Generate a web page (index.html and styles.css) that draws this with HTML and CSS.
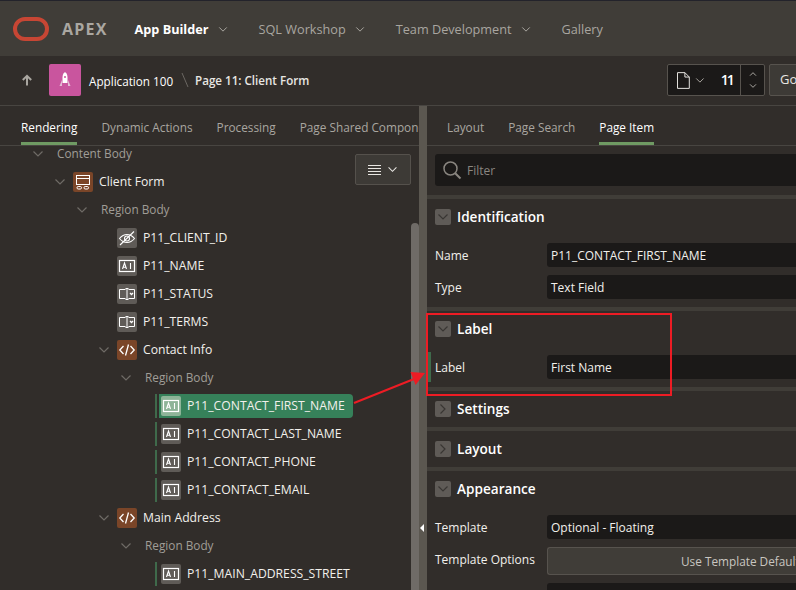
FILE: index.html
```html
<!DOCTYPE html>
<html lang="en">
<head>
<meta charset="utf-8">
<title>Page Designer</title>
<link rel="stylesheet" href="styles.css">
</head>
<body>
<svg class="defs" width="0" height="0">
  <symbol id="chev-d" viewBox="0 0 12 8"><path d="M1.5 1.5 6 6l4.500-4.500" fill="none" stroke="currentColor" stroke-width="1.200"/></symbol>
  <symbol id="chev-r" viewBox="0 0 8 12"><path d="M1.500 1.500 6 6l-4.500 4.500" fill="none" stroke="currentColor" stroke-width="1.200"/></symbol>
  <symbol id="ic-region" viewBox="0 0 20 20"><g fill="none" stroke="#fff" stroke-width="1"><rect x="3.500" y="3.500" width="13" height="3"/><rect x="3.500" y="6.500" width="13" height="6"/><rect x="4" y="14.500" width="4.500" height="2.500" rx="1.200"/><rect x="11" y="14.500" width="4.500" height="2.500" rx="1.200"/></g></symbol>
  <symbol id="ic-code" viewBox="0 0 20 20"><path d="M6.500 6 2.800 10l3.700 4M13.500 6l3.700 4-3.700 4M11.500 4.500l-3 11" fill="none" stroke="#fff" stroke-width="1.300"/></symbol>
  <symbol id="ic-text" viewBox="0 0 20 20"><rect x="2.500" y="4.500" width="15" height="11" fill="none" stroke="#fff" stroke-width="1.200"/><path d="M5.500 13 7.500 7l2 6M6.200 11.200h2.600M13.500 7v6" fill="none" stroke="#fff" stroke-width="1.100"/></symbol>
  <symbol id="ic-select" viewBox="0 0 20 20"><path d="M8.500 5.500h-6v9h6M10 4.500v11M8.500 4.500h3M8.500 15.500h3M11.500 5.500h6v9h-6" fill="none" stroke="#fff"/><path d="M13 9l1.500 1.500L16 9" fill="none" stroke="#fff" stroke-width="1.300"/></symbol>
  <symbol id="ic-hidden" viewBox="0 0 20 20"><g fill="none" stroke="#fff" stroke-width="1.100"><path d="M2.500 10.500C5 7.500 7.500 6.500 10 6.500s5 1 7.500 4c-2.500 3-5 4-7.500 4s-5-1-7.500-4Z"/><circle cx="10" cy="10.500" r="2.500"/><path d="M3 17 17 3.500"/></g></symbol>
</svg>

<header class="topbar">
  <svg class="logo" width="36" height="24" viewBox="0 0 36 24"><rect x="2" y="2" width="32" height="20" rx="10" fill="none" stroke="#c74634" stroke-width="4"/></svg>
  <span class="brand">APEX</span>
  <nav class="topnav">
    <a class="topnav-item is-active">App Builder <svg class="topchev" width="10" height="7"><use href="#chev-d"/></svg></a>
    <a class="topnav-item">SQL Workshop <svg class="topchev" width="10" height="7"><use href="#chev-d"/></svg></a>
    <a class="topnav-item">Team Development <svg class="topchev" width="10" height="7"><use href="#chev-d"/></svg></a>
    <a class="topnav-item">Gallery</a>
  </nav>
</header>

<div class="toolbar">
  <svg class="up-arrow" width="12" height="12" viewBox="0 0 12 12"><path d="M6 11.500V2M1.800 6 6 1.800 10.200 6" fill="none" stroke="#a9a6a0" stroke-width="2"/></svg>
  <span class="app-icon">
    <svg width="14" height="18" viewBox="0 0 14 18"><path d="M7 1c2 1.500 2.500 3.500 2.500 5.500V12h-5V6.500C4.500 4.500 5 2.500 7 1Z" fill="#fff"/><path d="M4 9 1.500 15H4ZM10 9l2.500 6H10Z" fill="#e3bcd5"/><circle cx="7" cy="6" r="1" fill="#c9559e"/></svg>
  </span>
  <span class="crumb">Application 100</span>
  <svg class="crumb-sep" width="8" height="16"><path d="M1 1l6 14" stroke="#6b6762" fill="none"/></svg>
  <span class="crumb crumb-page">Page 11: Client Form</span>
  <div class="pager">
    <svg class="page-ic" width="13" height="17" viewBox="0 0 13 17"><path d="M.5.500H8L12.500 5v11.500H.5ZM8 .5V5h4.500" fill="none" stroke="#e8e6e2"/></svg>
    <svg class="pager-chev" width="10" height="7"><use href="#chev-d"/></svg>
    <span class="pager-num">11</span>
    <span class="pager-steps">
      <svg width="8" height="6" viewBox="0 0 12 8"><path d="M1.500 6.500 6 2l4.500 4.500" fill="none" stroke="#a9a6a0" stroke-width="1.500"/></svg>
      <svg width="8" height="6" viewBox="0 0 12 8"><path d="M1.500 1.500 6 6l4.500-4.500" fill="none" stroke="#a9a6a0" stroke-width="1.500"/></svg>
    </span>
  </div>
  <span class="go-btn">Go</span>
</div>

<main class="workspace">
  <section class="left-pane">
    <div class="tabs tabs-left">
      <a class="tab is-active">Rendering</a>
      <a class="tab">Dynamic Actions</a>
      <a class="tab">Processing</a>
      <a class="tab">Page Shared Components</a>
    </div>
    <div class="tree-wrap">
      <span class="menu-btn">
        <svg width="14" height="10" viewBox="0 0 14 10"><path d="M0 .500h13M0 3.500h13M0 6.500h13M0 9.500h13" stroke="#e8e6e2"/></svg>
        <svg width="11" height="7"><use href="#chev-d"/></svg>
      </span>
      <div class="scroll-thumb"></div>
      <ul class="tree">
        <li class="row lv1"><svg class="tw"><use href="#chev-d"/></svg><span class="muted">Content Body</span></li>
        <li class="row lv2"><svg class="tw"><use href="#chev-d"/></svg><span class="ic ic-brown"><svg width="20" height="20"><use href="#ic-region"/></svg></span><span>Client Form</span></li>
        <li class="row lv3"><svg class="tw"><use href="#chev-d"/></svg><span class="muted">Region Body</span></li>
        <li class="row lv4"><span class="ic"><svg width="20" height="20"><use href="#ic-hidden"/></svg></span><span>P11_CLIENT_ID</span></li>
        <li class="row lv4"><span class="ic"><svg width="20" height="20"><use href="#ic-text"/></svg></span><span>P11_NAME</span></li>
        <li class="row lv4"><span class="ic"><svg width="20" height="20"><use href="#ic-select"/></svg></span><span>P11_STATUS</span></li>
        <li class="row lv4"><span class="ic"><svg width="20" height="20"><use href="#ic-select"/></svg></span><span>P11_TERMS</span></li>
        <li class="row lv3b"><svg class="tw"><use href="#chev-d"/></svg><span class="ic ic-brown"><svg width="20" height="20"><use href="#ic-code"/></svg></span><span>Contact Info</span></li>
        <li class="row lv4b"><svg class="tw"><use href="#chev-d"/></svg><span class="muted">Region Body</span></li>
        <li class="row lv5 is-selected"><span class="leaf"><span class="ic"><svg width="20" height="20"><use href="#ic-text"/></svg></span><span>P11_CONTACT_FIRST_NAME</span></span></li>
        <li class="row lv5"><span class="leaf"><span class="ic"><svg width="20" height="20"><use href="#ic-text"/></svg></span><span>P11_CONTACT_LAST_NAME</span></span></li>
        <li class="row lv5"><span class="leaf"><span class="ic"><svg width="20" height="20"><use href="#ic-text"/></svg></span><span>P11_CONTACT_PHONE</span></span></li>
        <li class="row lv5"><span class="leaf"><span class="ic"><svg width="20" height="20"><use href="#ic-text"/></svg></span><span>P11_CONTACT_EMAIL</span></span></li>
        <li class="row lv3b"><svg class="tw"><use href="#chev-d"/></svg><span class="ic ic-brown"><svg width="20" height="20"><use href="#ic-code"/></svg></span><span>Main Address</span></li>
        <li class="row lv4b"><svg class="tw"><use href="#chev-d"/></svg><span class="muted">Region Body</span></li>
        <li class="row lv5"><span class="leaf"><span class="ic"><svg width="20" height="20"><use href="#ic-text"/></svg></span><span>P11_MAIN_ADDRESS_STREET</span></span></li>
      </ul>
    </div>
  </section>

  <div class="splitter"><span class="split-arrow"></span></div>

  <section class="right-pane">
    <div class="tabs tabs-right">
      <a class="tab">Layout</a>
      <a class="tab">Page Search</a>
      <a class="tab is-active">Page Item</a>
    </div>
    <div class="filter-wrap">
      <div class="filter">
        <svg width="20" height="20" viewBox="0 0 20 20"><circle cx="8.500" cy="8.500" r="6.500" fill="none" stroke="#8a8680" stroke-width="1.500"/><path d="M13.200 13.200 18.500 18.500" stroke="#8a8680" stroke-width="2"/></svg>
        <span class="filter-text">Filter</span>
      </div>
    </div>
    <div class="group">
      <div class="group-head"><span class="toggle"><svg width="12" height="8"><use href="#chev-d"/></svg></span>Identification</div>
      <div class="prop"><span class="prop-label">Name</span><span class="field">P11_CONTACT_FIRST_NAME</span></div>
      <div class="prop"><span class="prop-label">Type</span><span class="field">Text Field</span></div>
    </div>
    <div class="group">
      <div class="group-head"><span class="toggle"><svg width="12" height="8"><use href="#chev-d"/></svg></span>Label</div>
      <div class="prop prop-flagged"><span class="prop-label">Label</span><span class="field">First Name</span></div>
    </div>
    <div class="group group-closed">
      <div class="group-head"><span class="toggle"><svg width="8" height="12"><use href="#chev-r"/></svg></span>Settings</div>
    </div>
    <div class="group group-closed">
      <div class="group-head"><span class="toggle"><svg width="8" height="12"><use href="#chev-r"/></svg></span>Layout</div>
    </div>
    <div class="group">
      <div class="group-head"><span class="toggle"><svg width="12" height="8"><use href="#chev-d"/></svg></span>Appearance</div>
      <div class="prop"><span class="prop-label">Template</span><span class="field">Optional - Floating</span></div>
      <div class="prop prop-btn"><span class="prop-label">Template Options</span><span class="field-btn">Use Template Defaults</span></div>
      <div class="prop"><span class="prop-label"></span><span class="field"></span></div>
    </div>
  </section>
</main>

<div class="callout"></div>
<svg class="arrow" width="796" height="590" viewBox="0 0 796 590">
  <path d="M354 403 414 379" stroke="#ed1c24" stroke-width="2" fill="none"/>
  <path d="M425 373 410.500 372 415.500 385Z" fill="#ed1c24"/>
</svg>
</body>
</html>
```
FILE: styles.css
```css
* { box-sizing: border-box; }
html, body { margin: 0; height: 100%; }
body {
  position: relative;
  width: 796px;
  height: 590px;
  overflow: hidden;
  background: #312d2a;
  color: #fff;
  font: 12px/1.2 "Open Sans", "Noto Sans", sans-serif;
  display: flex;
  flex-direction: column;
}
.defs { position: absolute; }
ul { list-style: none; margin: 0; padding: 0; }

/* top bar */
.topbar {
  height: 56px;
  flex: none;
  display: flex;
  align-items: center;
  background: #403d38;
  border-top: 1px solid #23232b;
  padding: 2px 0 0 13px;
}
.logo { margin-top: -2px; }
.brand { margin-left: 13px; font-size: 16px; font-weight: 700; letter-spacing: 1.200px; color: #aaa7a1; }
.topnav { display: flex; margin-left: 27px; gap: 31px; font-size: 12.700px; }
.topnav-item { display: flex; align-items: center; color: #a9a6a0; white-space: nowrap; }
.topnav-item.is-active { color: #fff; font-weight: 700; }
.topchev { margin-left: 9px; color: #a9a6a0; }

/* toolbar */
.toolbar {
  height: 50px;
  flex: none;
  display: flex;
  align-items: center;
  padding-left: 21px;
  border-bottom: 1px solid #484541;
  padding-bottom: 1px;
}
.app-icon {
  width: 32px; height: 32px; margin-left: 16px; margin-right: 8px;
  background: #c9559e; border-radius: 2px;
  display: flex; align-items: center; justify-content: center;
}
.crumb { white-space: nowrap; padding-top: 2px; font-size: 11.700px; }
.crumb-sep { margin: 0 6px 0 8px; }
.crumb-page { font-weight: 600; color: #e8e6e2; font-size: 11.600px; }
.pager {
  margin-left: auto;
  width: 98px; height: 32px;
  display: flex; align-items: center;
  background: #1b1918;
  border: 1px solid #57534e;
  border-radius: 2px;
  padding-left: 9px;
}
.pager-chev { margin-left: 5px; color: #a9a6a0; }
.pager-num { margin-left: 16px; font-size: 14px; font-weight: 600; letter-spacing: -2px; width: 20px; }
.pager-steps {
  margin-left: auto; width: 24px; height: 100%;
  border-left: 1px solid #57534e;
  display: flex; flex-direction: column; align-items: center; justify-content: center; gap: 6px;
}
.go-btn {
  margin-left: 4px; margin-right: -12px;
  width: 39px; height: 32px; padding-left: 10px; flex: none;
  display: flex; align-items: center;
  background: #3d3a36; border: 1px solid #57534e; border-radius: 2px;
  color: #e8e6e2; font-size: 13px;
}

/* workspace */
.workspace { flex: 1; display: flex; min-height: 0; }
.left-pane { width: 419px; flex: none; overflow: hidden; display: flex; flex-direction: column; }
.splitter { width: 8px; flex: none; background: #5b5750; position: relative; }
.split-arrow {
  position: absolute; left: 1px; top: 418px;
  border: 4px solid transparent; border-right-color: #fff; border-left-width: 0;
}
.right-pane { flex: 1; min-width: 0; overflow: hidden; }

.tabs {
  height: 40px;
  flex: none;
  display: flex;
  border-bottom: 1px solid #484541;
  white-space: nowrap;
  overflow: hidden;
}
.tabs-left { padding-left: 21px; gap: 24px; }
.tabs-right { padding-left: 20px; gap: 24px; }
.tab { height: 39px; display: flex; align-items: center; padding-top: 6px; color: #a9a6a0; font-size: 11.800px; border-bottom: 3px solid transparent; }
.tab.is-active { color: #fff; border-bottom-color: #6f9a63; }

/* tree */
.tree-wrap { position: relative; flex: 1; overflow: hidden; }
.menu-btn {
  position: absolute; left: 355px; top: 8px;
  width: 56px; height: 31px;
  display: flex; align-items: center; justify-content: center; gap: 5px;
  background: #3d3a36; border: 1px solid #55514c; border-radius: 2px;
  color: #e8e6e2;
}
.scroll-thumb {
  position: absolute; left: 411px; top: 77px; bottom: 0; width: 8px;
  background: #6f6b67; border-radius: 4px 4px 0 0;
}
.tree { margin-top: -6px; }
.row { height: 28px; display: flex; align-items: center; white-space: nowrap; color: #f2f0ec; font-size: 12.200px; }
.tw { width: 12px; height: 8px; color: #6f6b66; flex: none; margin-right: 13px; }
.muted { color: #a09d97; font-size: 11.800px; margin-bottom: 2px; }
.ic {
  width: 20px; height: 20px; flex: none; margin-right: 6px;
  background: #5f5b57; border-radius: 2px;
  display: inline-flex;
}
.ic-brown { background: #7a4528; }
.lv1 { padding-left: 32px; }
.lv1 .tw { margin-right: 13px; }
.lv2 { padding-left: 54px; }
.lv2 .tw { margin-right: 7px; }
.lv3 { padding-left: 76px; }
.lv3 .tw { margin-right: 13px; }
.lv3b { padding-left: 98px; }
.lv3b .tw { margin-right: 7px; }
.lv4 { padding-left: 117px; }
.lv4b { padding-left: 120px; }
.lv4b .tw { margin-right: 13px; }
.lv5 { padding-left: 155px; }
.leaf {
  height: 24px; display: flex; align-items: center;
  border-left: 2px solid #3f6a4b;
  padding-left: 4px;
}
.is-selected .leaf { background: linear-gradient(90deg, #312d2a 2px, #36815a 2px); border-radius: 0 4px 4px 0; width: 198px; }
.is-selected .ic { background: #8eb498; }

/* property editor */
.filter-wrap { padding: 8px 0 9px 8px; }
.filter {
  height: 32px; display: flex; align-items: center; gap: 5px;
  padding-left: 7px;
  background: #1b1918; border-radius: 3px 0 0 3px;
  color: #8a8680;
}
.filter-text { padding-top: 2px; }
.group { border-top: 4px solid #403d38; padding: 10px 0 8px 8px; }
.group-closed { height: 40px; }
.group-head { height: 16px; display: flex; align-items: center; gap: 6px; font-size: 13.600px; font-weight: 600; margin-bottom: 18px; }
.toggle {
  width: 16px; height: 16px; flex: none; background: #5f5b57; border-radius: 2px;
  display: flex; align-items: center; justify-content: center; color: #393633;
}
.prop { height: 24px; display: flex; align-items: center; margin-bottom: 8px; position: relative; }
.prop:last-child { margin-bottom: 0; }
.prop-label { width: 112px; flex: none; color: #f2f0ec; white-space: nowrap; padding-top: 2px; }
.field {
  flex: 1; height: 24px; display: flex; align-items: center; padding: 2px 0 0 4px;
  background: #1b1918; border-radius: 3px 0 0 3px; white-space: nowrap; color: #f2f0ec;
}
.prop-btn { height: 28px; }
.prop-btn .prop-label { align-self: flex-start; padding-top: 6px; }
.field-btn {
  flex: 1; height: 28px; display: flex; align-items: center;
  padding: 0 0 0 133px;
  background: #403d38; border: 1px solid #57534e; border-right: 0; border-radius: 3px 0 0 3px;
  white-space: nowrap; color: #c9c6c0; overflow: hidden; font-size: 11.800px;
}
.prop-flagged::before {
  content: ""; position: absolute; left: -7px; top: -3px; width: 3px; height: 30px; background: #3f6a4b;
}

/* annotation overlay */
.callout { position: absolute; left: 426px; top: 313px; width: 246px; height: 83px; border: 2px solid #ed1c24; }
.arrow { position: absolute; left: 0; top: 0; pointer-events: none; }
```
